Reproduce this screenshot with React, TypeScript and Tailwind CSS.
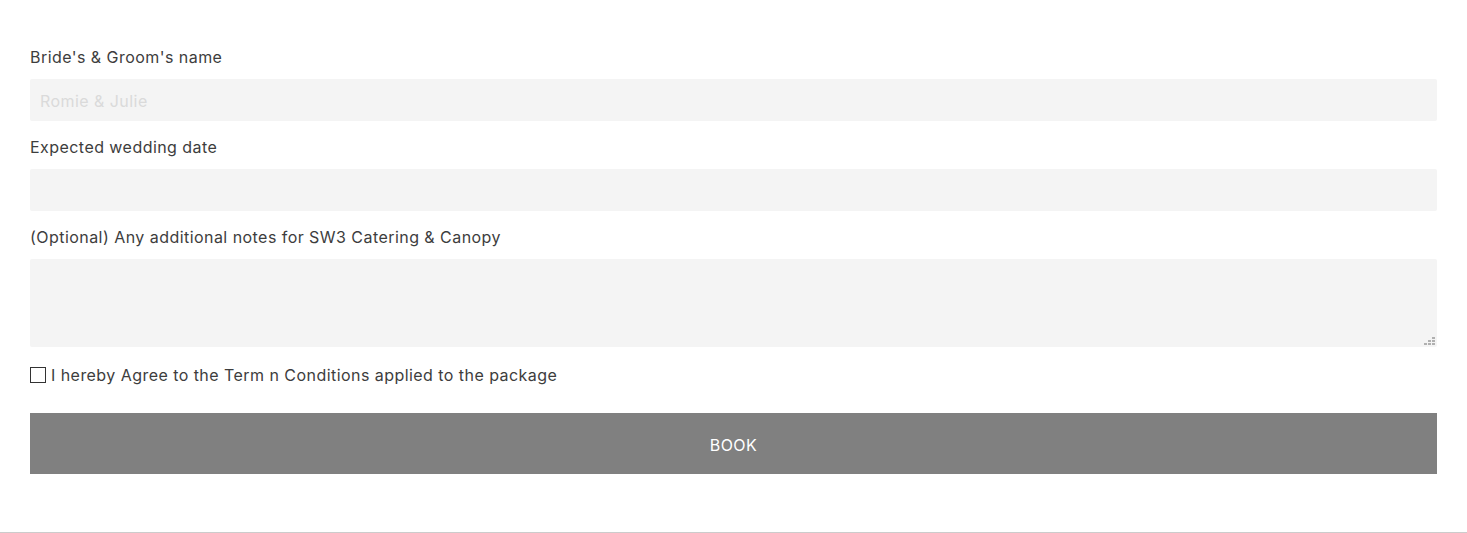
export default function App() {
  return (
    <div className="min-h-screen bg-white tracking-[0.45px]" style={{ fontFamily: 'Inter, "Noto Sans", sans-serif' }}>
      <form className="border-b border-[#cccccc] px-[30px] pt-[45px] pb-[58px]">
        <div className="mb-[14px]">
          <label className="mb-[10px] block text-[16px] leading-[24px] text-[#3d3d3d]">Bride's &amp; Groom's name</label>
          <input
            type="text"
            placeholder="Romie & Julie"
            className="block h-[42px] w-full rounded-[2px] bg-[#f4f4f4] px-[10px] pt-[2px] text-[16px] text-[#333] outline-none placeholder:text-[#dadada]"
          />
        </div>
        <div className="mb-[14px]">
          <label className="mb-[10px] block text-[16px] leading-[24px] text-[#3d3d3d]">Expected wedding date</label>
          <input type="text" className="block h-[42px] w-full rounded-[2px] bg-[#f4f4f4] px-[10px] text-[16px] outline-none" />
        </div>
        <div className="mb-[16px]">
          <label className="mb-[10px] block text-[16px] leading-[24px] text-[#3d3d3d]">
            (Optional) Any additional notes for SW3 Catering &amp; Canopy
          </label>
          <div className="relative">
            <textarea className="block h-[88px] w-full resize-none rounded-[2px] bg-[#f4f4f4] px-[10px] py-[8px] text-[16px] outline-none" />
            {/* resize grip */}
            <div className="absolute right-[2px] bottom-[2px] flex flex-col items-end gap-[1px]">
              <div className="flex gap-[1px]">
                <span className="block h-[2px] w-[3px] bg-[#b0b0b0]" />
              </div>
              <div className="flex gap-[1px]">
                <span className="block h-[2px] w-[3px] bg-[#b0b0b0]" />
                <span className="block h-[2px] w-[3px] bg-[#b0b0b0]" />
              </div>
              <div className="flex gap-[1px]">
                <span className="block h-[2px] w-[3px] bg-[#b0b0b0]" />
                <span className="block h-[2px] w-[3px] bg-[#b0b0b0]" />
                <span className="block h-[2px] w-[3px] bg-[#b0b0b0]" />
              </div>
            </div>
          </div>
        </div>
        <label className="mb-[26px] flex items-center gap-[5px] text-[16px] leading-[24px] text-[#3d3d3d]">
          <span className="block h-[16px] w-[16px] border border-[#333]" />
          I hereby Agree to the Term n Conditions applied to the package
        </label>
        <button type="button" className="block h-[61px] w-full bg-[#808080] pt-[2px] text-[16px] text-white">
          BOOK
        </button>
      </form>
    </div>
  );
}
